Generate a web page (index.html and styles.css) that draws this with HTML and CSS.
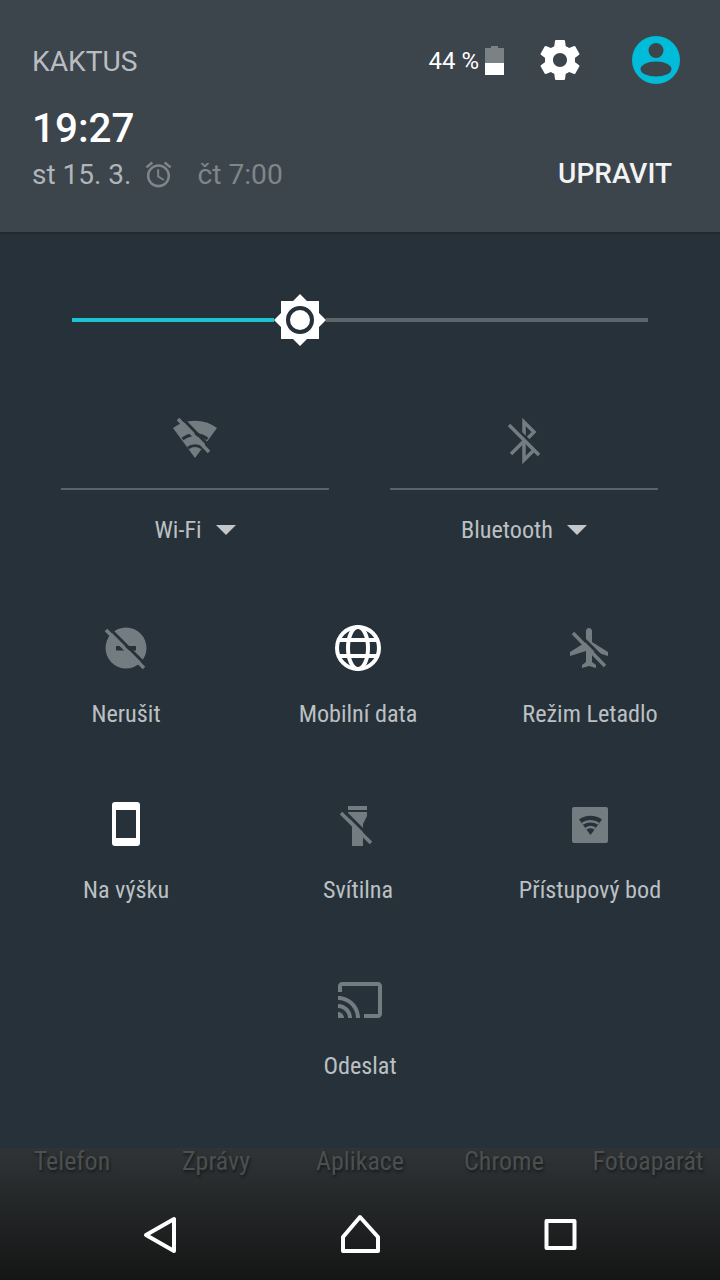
FILE: index.html
```html
<!DOCTYPE html>
<html lang="cs">
<head>
<meta charset="utf-8">
<title>Rychlé nastavení</title>
<link rel="stylesheet" href="styles.css">
</head>
<body>
<div class="screen">
  <header class="header">
    <div class="status">
      <span class="carrier">KAKTUS</span>
      <span class="percent">44 %</span>
      <svg class="battery" viewBox="0 0 19 29"><path class="dim" d="M6 0h7v2h6v15H0V2h6z"/><rect class="lit" y="17" width="19" height="12"/></svg>
      <svg class="gear" viewBox="0 0 24 24"><path class="lit" d="M19.43 12.98c.04-.32.07-.64.07-.98s-.03-.66-.07-.98l2.11-1.65c.19-.15.24-.42.12-.64l-2-3.46c-.12-.22-.39-.3-.61-.22l-2.49 1c-.52-.4-1.08-.73-1.69-.98l-.38-2.65C14.46 2.18 14.25 2 14 2h-4c-.25 0-.46.18-.49.42l-.38 2.65c-.61.25-1.17.59-1.69.98l-2.49-1c-.23-.09-.49 0-.61.22l-2 3.46c-.13.22-.07.49.12.64l2.11 1.65c-.04.32-.07.65-.07.98s.03.66.07.98l-2.11 1.65c-.19.15-.24.42-.12.64l2 3.46c.12.22.39.3.61.22l2.49-1c.52.4 1.08.73 1.69.98l.38 2.65c.03.24.24.42.49.42h4c.25 0 .46-.18.49-.42l.38-2.65c.61-.25 1.17-.59 1.69-.98l2.49 1c.23.09.49 0 .61-.22l2-3.46c.12-.22.07-.49-.12-.64l-2.11-1.65zM12 15.5c-1.93 0-3.5-1.57-3.5-3.5s1.57-3.5 3.5-3.5 3.5 1.57 3.5 3.5-1.57 3.5-3.5 3.5z"/></svg>
      <svg class="avatar" viewBox="0 0 48 48"><circle class="teal" cx="24" cy="24" r="24"/><circle class="hole" cx="24" cy="14.500" r="7.500"/><ellipse class="hole" cx="24" cy="33" rx="15.500" ry="7.500"/></svg>
    </div>
    <div class="time">19:27</div>
    <div class="date-row">
      <span class="date">st 15. 3.</span>
      <svg class="alarm-icon" viewBox="0 0 24 24"><path class="alarm-fill" d="M22 5.72l-4.6-3.86-1.29 1.53 4.6 3.86L22 5.72zM7.88 3.39L6.6 1.86 2 5.71l1.29 1.53 4.59-3.85zM12.5 8H11v6l4.75 2.85.75-1.23-4-2.37V8zM12 4c-4.97 0-9 4.03-9 9s4.03 9 9 9 9-4.03 9-9-4.03-9-9-9zm0 16c-3.87 0-7-3.13-7-7s3.13-7 7-7 7 3.13 7 7-3.13 7-7 7z"/></svg>
      <span class="alarm">čt 7:00</span>
      <span class="edit">UPRAVIT</span>
    </div>
  </header>

  <main class="panel">
    <div class="slider">
      <div class="fill" style="width:202px"></div>
      <svg class="thumb" viewBox="0 0 52 52"><path class="lit" d="M26 0l7 7h12v12l7 7-7 7v12H33l-7 7-7-7H7V33l-7-7 7-7V7h12z"/><circle class="ring" cx="26" cy="26" r="12"/></svg>
      <div class="rest"></div>
    </div>

    <div class="duo">
      <div class="duo-tile">
        <svg class="icon" viewBox="0 0 48 48">
          <path class="gray" d="M24 44L2 14A37 37 0 0 1 46 14z"/>
          <path class="cut-thin" d="M11.500 25A21 21 0 0 1 36.500 25M17 34A12 12 0 0 1 31 34"/>
          <path class="cut" d="M10 3L43 37"/>
          <path class="slash" d="M7 5L38 38"/>
        </svg>
        <div class="rule"></div>
        <div class="duo-label">Wi-Fi<span class="caret"></span></div>
      </div>
      <div class="duo-tile">
        <svg class="icon icon-bt" viewBox="0 0 48 48">
          <path class="bt" d="M24 22V6L34 16l-6 6M11 38l13-13M24 26v18l10-10-6-6"/>
          <path class="cut" d="M11 7L41 37"/>
          <path class="slash" d="M9 9L39 39"/>
        </svg>
        <div class="rule"></div>
        <div class="duo-label">Bluetooth<span class="caret"></span></div>
      </div>
    </div>

    <div class="grid">
      <div class="tile">
        <svg class="icon" viewBox="0 0 48 48">
          <circle class="gray" cx="24" cy="24" r="20.500"/>
          <rect class="hole-panel" x="14" y="22" width="20" height="4.500"/>
          <path class="cut" d="M6 3L45 42"/>
          <path class="slash" d="M4 6L42 44"/>
        </svg>
        <span class="label">Nerušit</span>
      </div>
      <div class="tile">
        <svg class="icon" viewBox="0 0 48 48">
          <g class="globe"><circle cx="24" cy="24" r="21"/><ellipse cx="24" cy="24" rx="10" ry="21"/><path d="M5 16h38M5 32h38"/></g>
        </svg>
        <span class="label">Mobilní data</span>
      </div>
      <div class="tile">
        <svg class="icon" viewBox="0 0 48 48">
          <path class="gray" transform="scale(2)" d="M21 16v-2l-8-5V3.500c0-.83-.67-1.500-1.500-1.500S10 2.670 10 3.500V9l-8 5v2l8-2.500V19l-2 1.500V22l3.500-1 3.500 1v-1.500L13 19v-5.500l8 2.500z"/>
          <path class="cut" d="M9 6L43 40"/>
          <path class="slash" d="M7 9L39 42"/>
        </svg>
        <span class="label">Režim Letadlo</span>
      </div>
      <div class="tile">
        <svg class="icon" viewBox="0 0 48 48"><path class="lit odd" d="M13 2h22a3 3 0 0 1 3 3v38a3 3 0 0 1-3 3H13a3 3 0 0 1-3-3V5a3 3 0 0 1 3-3zM14 10v28h20V10z"/></svg>
        <span class="label">Na výšku</span>
      </div>
      <div class="tile">
        <svg class="icon" viewBox="0 0 48 48">
          <path class="gray" d="M14 6h19v4H14zM14 12h19v4l-4 8v22H18V24l-4-8z"/>
          <path class="cut" d="M9 10L40 41"/>
          <path class="slash" d="M7 13L37 43"/>
        </svg>
        <span class="label">Svítilna</span>
      </div>
      <div class="tile">
        <svg class="icon" viewBox="0 0 48 48">
          <rect class="gray" x="6" y="7" width="36" height="36" rx="2"/>
          <path class="hole-panel" d="M24.500 35L13 19.500A19.500 19.500 0 0 1 36 19.500z"/>
          <path class="wifi-gap" d="M16.300 23.800A14 14 0 0 1 32.700 23.800M19.800 28.800A8 8 0 0 1 29.200 28.800"/>
        </svg>
        <span class="label">Přístupový bod</span>
      </div>
    </div>

    <div class="tile tile-solo">
      <svg class="icon" viewBox="0 0 24 24"><path class="gray" d="M21 3H3c-1.100 0-2 .9-2 2v3h2V5h18v14h-7v2h7c1.100 0 2-.9 2-2V5c0-1.100-.9-2-2-2zM1 18v3h3c0-1.660-1.340-3-3-3zm0-4v2c2.760 0 5 2.240 5 5h2c0-3.870-3.130-7-7-7zm0-4v2c4.970 0 9 4.030 9 9h2c0-6.080-4.930-11-11-11z"/></svg>
      <span class="label">Odeslat</span>
    </div>
  </main>

  <footer class="nav">
    <div class="dock">
      <span class="dock-item">Telefon</span>
      <span class="dock-item">Zprávy</span>
      <span class="dock-item">Aplikace</span>
      <span class="dock-item">Chrome</span>
      <span class="dock-item">Fotoaparát</span>
    </div>
    <div class="keys">
      <svg class="key" viewBox="0 0 48 48"><path class="line" d="M38 8v32L10 24z"/></svg>
      <svg class="key" viewBox="0 0 48 48"><path class="line" d="M24 6L42 26v14H7V26z"/></svg>
      <svg class="key" viewBox="0 0 48 48"><path class="line" d="M10.500 10h28v27h-28z"/></svg>
    </div>
  </footer>
</div>
</body>
</html>
```

FILE: styles.css
```css
* { box-sizing: border-box; }
html, body { margin: 0; padding: 0; }
body { background: #263139; font-family: Roboto, "Noto Sans", sans-serif; }
.screen { width: 720px; height: 1280px; display: flex; flex-direction: column; overflow: hidden; }

.header { height: 232px; flex: none; padding: 36px 40px 0 32px; background: #3c444c; box-shadow: 0 1px 3px rgba(0,0,0,.25); position: relative; }
.status { display: flex; align-items: center; height: 48px; }
.carrier { font-size: 28.2px; color: #b9bdc0; margin-right: auto; margin-top: 2px; }
.percent { font-size: 24px; color: #fff; margin-right: 6px; margin-top: 2px; }
.battery { width: 19px; height: 29px; margin-right: 32px; }
.gear { width: 48px; height: 48px; margin-right: 48px; }
.avatar { width: 48px; height: 48px; }
.teal { fill: #00bcd8; }
.hole { fill: #3c444c; }
.dim { fill: #7a8285; }
.lit { fill: #fff; }
.odd { fill-rule: evenodd; }
.time { font-size: 40.4px; font-weight: 500; line-height: 48px; color: #fff; margin-top: 21px; }
.date-row { display: flex; align-items: center; height: 40px; margin-top: 1px; }
.date { font-size: 28px; color: #b0b5b8; }
.alarm-icon { width: 31px; height: 31px; margin-left: 12px; }
.alarm-fill { fill: #7f868b; }
.alarm { font-size: 28.2px; color: #7f868b; margin-left: 23px; }
.edit { font-size: 28px; font-weight: 500; color: #f2f3f3; margin-left: auto; margin-right: 8px; margin-bottom: 2px; }

.panel { flex: 1; background: #263139; }
.slider { display: flex; align-items: center; height: 52px; margin: 62px 72px 0; }
.fill { height: 4px; background: #1cc4d0; flex: none; }
.thumb { width: 52px; height: 52px; flex: none; }
.ring { fill: #fff; stroke: #263139; stroke-width: 4; }
.rest { flex: 1; height: 4px; background: #5d676b; }

.icon { width: 48px; height: 48px; display: block; }
.gray { fill: #737c80; }
.cut { stroke: #263139; stroke-width: 3; fill: none; }
.cut-thin { stroke: #263139; stroke-width: 3; fill: none; }
.slash { stroke: #737c80; stroke-width: 3.5; fill: none; }
.bt { stroke: #737c80; stroke-width: 3.5; fill: none; }
.hole-panel { fill: #263139; }
.wifi-gap { stroke: #737c80; stroke-width: 2.5; fill: none; }
.globe { stroke: #fff; stroke-width: 4; fill: none; }

.duo { display: flex; gap: 61px; margin: 68px 62px 0 61px; }
.duo-tile { width: 268px; display: flex; flex-direction: column; align-items: center; }
.icon-bt { transform: translateY(2px); }
.rule { width: 100%; height: 2px; background: #5a6468; margin-top: 26px; }
.duo-label { display: flex; align-items: center; height: 40px; margin-top: 20px; font-size: 24.2px; color: #bcc0c3; font-stretch: 75%; }
.caret { width: 0; height: 0; margin-left: 14px; border-left: 10px solid transparent; border-right: 10px solid transparent; border-top: 10px solid #c4c7c9; }

.grid { display: grid; grid-template-columns: repeat(3, 232px); row-gap: 66px; margin: 74px 14px 0 10px; }
.tile { display: flex; flex-direction: column; align-items: center; }
.label { height: 40px; line-height: 40px; margin-top: 22px; font-size: 24.2px; color: #bcc0c3; white-space: nowrap; font-stretch: 75%; }
.tile-solo { margin-top: 66px; }

.nav { height: 132px; flex: none; background: linear-gradient(#303436, #141515); }
.dock { display: grid; grid-template-columns: repeat(5, 144px); height: 26px; }
.dock-item { text-align: center; font-size: 26px; line-height: 26px; color: #4c4f50; text-shadow: 1px 2px 3px rgba(0,0,0,.5); font-stretch: 75%; white-space: nowrap; }
.keys { display: flex; justify-content: center; gap: 152px; margin-top: 37px; }
.key { width: 48px; height: 48px; }
.line { fill: none; stroke: #fff; stroke-width: 4; stroke-linejoin: round; }
```
